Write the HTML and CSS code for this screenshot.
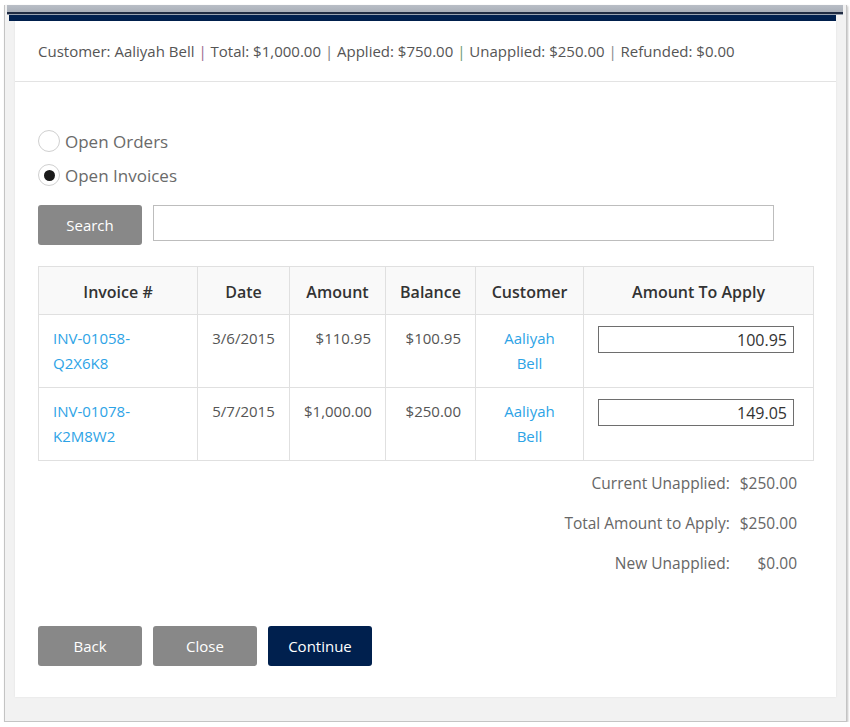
FILE: index.html
```html
<!DOCTYPE html>
<html>
<head>
<meta charset="utf-8">
<link rel="stylesheet" href="styles.css">
</head>
<body>
<div class="window">
  <div class="chrome"></div>
  <div class="navy"></div>
  <div class="card">
    <div class="summary-bar">
      Customer: Aaliyah Bell <span class="sep s1">|</span> Total: $1,000.00 <span class="sep s2">|</span> Applied: $750.00 <span class="sep s3">|</span> Unapplied: $250.00 <span class="sep s4">|</span> Refunded: $0.00
    </div>
    <div class="body">
      <div class="radios">
        <label class="radio"><span class="circle"></span>Open Orders</label>
        <label class="radio"><span class="circle checked"></span>Open Invoices</label>
      </div>
      <div class="search-row">
        <button class="btn gray">Search</button>
        <input class="search-input" type="text">
      </div>
      <table class="grid">
        <colgroup>
          <col class="w-inv">
          <col class="w-date">
          <col class="w-amt">
          <col class="w-bal">
          <col class="w-cust">
          <col class="w-apply">
        </colgroup>
        <thead>
          <tr>
            <th>Invoice #</th>
            <th>Date</th>
            <th>Amount</th>
            <th>Balance</th>
            <th>Customer</th>
            <th>Amount To Apply</th>
          </tr>
        </thead>
        <tbody>
          <tr>
            <td class="left"><a class="link">INV-01058-<br>Q2X6K8</a></td>
            <td class="center">3/6/2015</td>
            <td class="right">$110.95</td>
            <td class="right">$100.95</td>
            <td class="center"><a class="link">Aaliyah<br>Bell</a></td>
            <td class="left"><input class="apply" type="text" value="100.95"></td>
          </tr>
          <tr>
            <td class="left"><a class="link">INV-01078-<br>K2M8W2</a></td>
            <td class="center">5/7/2015</td>
            <td class="right">$1,000.00</td>
            <td class="right">$250.00</td>
            <td class="center"><a class="link">Aaliyah<br>Bell</a></td>
            <td class="left"><input class="apply" type="text" value="149.05"></td>
          </tr>
        </tbody>
      </table>
      <div class="totals">
        <span>Current Unapplied:</span><span>$250.00</span>
        <span>Total Amount to Apply:</span><span>$250.00</span>
        <span>New Unapplied:</span><span>$0.00</span>
      </div>
      <div class="actions">
        <button class="btn gray">Back</button>
        <button class="btn gray">Close</button>
        <button class="btn navybtn">Continue</button>
      </div>
    </div>
  </div>
</div>
</body>
</html>
```

FILE: styles.css
```css
html, body {
  margin: 0;
  padding: 0;
  background: #ffffff;
  font-family: "Open Sans", "Noto Sans", sans-serif;
}

.window {
  margin: 5px 3px 0 4px;
  height: 717px;
  background: #f2f2f2;
  border: 1px solid #c4c4c4;
  border-top: none;
  box-shadow: 1px 1px 2px rgba(0,0,0,0.25);
  box-sizing: border-box;
  display: flex;
  flex-direction: column;
}

.chrome {
  height: 10px;
  margin: 0 3px 0 2px;
  background: linear-gradient(to bottom,
    #b9bec6 0, #aab0b9 7px,
    #1f2b42 7px, #1f2b42 9px,
    #98a2b0 9px, #98a2b0 10px);
}

.navy {
  height: 6px;
  margin: 0 10px 0 4px;
  background: #00204e;
}

.card {
  margin: 0 10px 0 10px;
  background: #ffffff;
  height: 676px;
  box-shadow: 0 0 2px rgba(0,0,0,0.08);
}

.summary-bar {
  height: 60px;
  border-bottom: 1px solid #e3e3e3;
  padding: 0 0 0 23px;
  font-size: 15px;
  color: #555555;
  line-height: 60px;
}

.sep { color: #888; }
.s1 { color: #9b6a8c; }
.s2 { color: #7a7a7a; }
.s3 { color: #6a9a72; }
.s4 { color: #888888; }

.body {
  padding: 0 22px 0 23px;
}

.radios {
  padding-top: 48px;
  display: flex;
  flex-direction: column;
  gap: 12px;
}

.radio {
  display: flex;
  align-items: center;
  height: 22px;
  font-size: 17px;
  color: #6a6a6a;
}

.circle {
  width: 22px;
  height: 22px;
  box-sizing: border-box;
  border: 1.5px solid #d0d0d0;
  border-radius: 50%;
  margin-right: 5px;
  display: flex;
  align-items: center;
  justify-content: center;
  background: #fff;
}

.circle.checked::after {
  content: "";
  width: 11px;
  height: 11px;
  border-radius: 50%;
  background: #1a1a1a;
}

.search-row {
  margin-top: 19px;
  display: flex;
  gap: 11px;
  align-items: flex-start;
}

.btn {
  width: 104px;
  height: 40px;
  border: none;
  border-radius: 3px;
  color: #ffffff;
  font-family: "Open Sans", "Noto Sans", sans-serif;
  font-size: 15px;
  padding: 0;
  cursor: pointer;
}

.btn.gray { background: #888888; }
.btn.navybtn { background: #00204e; }

.search-input {
  width: 621px;
  height: 36px;
  box-sizing: border-box;
  border: 1px solid #bdbdbd;
  margin: 0;
  padding: 0 6px;
}

.grid {
  margin-top: 21px;
  width: 776px;
  table-layout: fixed;
  border-collapse: collapse;
  font-size: 15px;
  color: #555555;
}

.w-inv { width: 159px; }
.w-date { width: 92px; }
.w-amt { width: 96px; }
.w-bal { width: 90px; }
.w-cust { width: 108px; }
.w-apply { width: 230px; }

.grid th, .grid td {
  border: 1px solid #e0e0e0;
}

.grid th {
  background: #f9f9f9;
  height: 48px;
  padding: 2px 0 0 0;
  box-sizing: border-box;
  font-size: 16px;
  font-weight: 600;
  color: #333333;
  text-align: center;
}

.grid td {
  height: 73px;
  padding: 11px 14px 0 14px;
  box-sizing: border-box;
  vertical-align: top;
  line-height: 24.5px;
}

.left { text-align: left; }
.center { text-align: center; }
.right { text-align: right; }

.link {
  color: #2da3e6;
  text-decoration: none;
}

.apply {
  display: block;
  margin: 0;
  width: 196px;
  height: 27px;
  box-sizing: border-box;
  border: 1px solid #6e6e6e;
  text-align: right;
  font-family: "Open Sans", "Noto Sans", sans-serif;
  font-size: 16px;
  color: #333;
  padding: 0 6px;
}

.totals {
  margin-top: 12px;
  margin-right: 17px;
  display: grid;
  grid-template-columns: auto auto;
  justify-content: end;
  column-gap: 10px;
  row-gap: 20px;
  font-size: 15.5px;
  line-height: 20px;
  color: #666666;
  text-align: right;
}

.actions {
  margin-top: 53px;
  display: flex;
  gap: 11px;
}
```
